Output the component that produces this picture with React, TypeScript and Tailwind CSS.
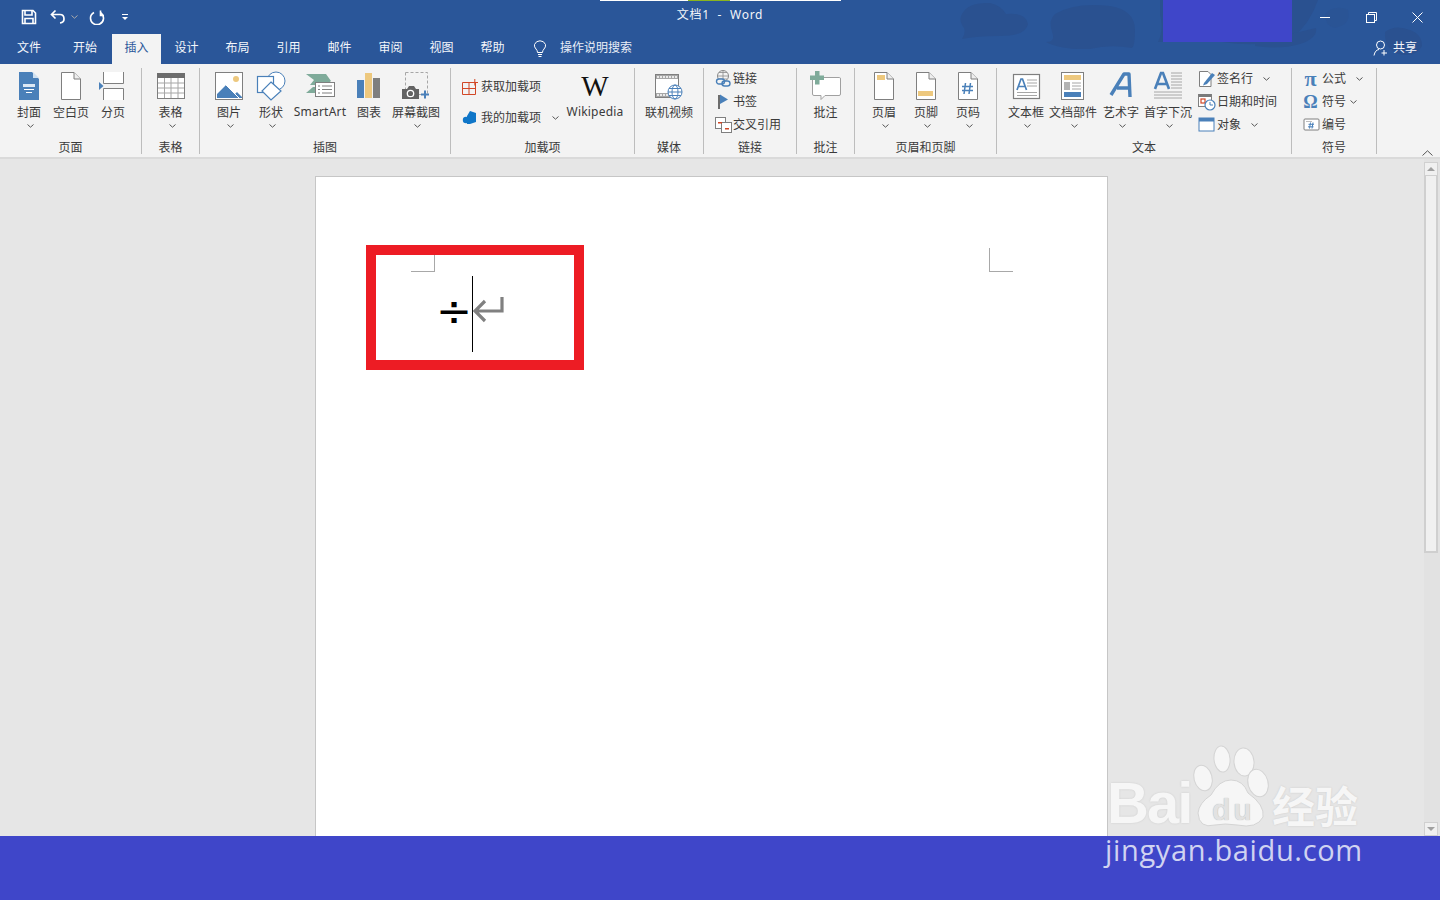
import React from "react";

const BLUE = "#4a80b9";
const TAN = "#edc87e";
const GRAY = "#7f7f7f";
const GREEN = "#7fab9a";
const RED = "#d24726";

type IconProps = { w: number; h?: number; children: React.ReactNode };
const Ic = ({ w, h = 30, children }: IconProps) => (
  <svg width={w} height={h} viewBox={`0 0 ${w} ${h}`} fill="none" className="block shrink-0">
    {children}
  </svg>
);

const Doc = ({ children }: { children?: React.ReactNode }) => (
  <Ic w={22}>
    <path d="M1.5 1.5H14L20.5 8V28.5H1.5Z" fill="#fff" stroke={GRAY} />
    <path d="M14 1.5V8H20.5" fill="#eee" stroke={GRAY} />
    {children}
  </Ic>
);

const Icons = {
  cover: (
    <Ic w={22}>
      <path d="M1 1H14L21 8V29H1Z" fill={BLUE} />
      <path d="M15 1L21 7H15Z" fill="#cfe0f0" />
      <rect x="5" y="13" width="12" height="3" fill="#dce8f4" />
      <rect x="6" y="18" width="10" height="1" fill="#fff" />
      <rect x="8" y="21" width="6" height="1" fill="#fff" />
    </Ic>
  ),
  blank: <Doc />,
  pageBreak: (
    <Ic w={29}>
      <path d="M0 11V19L4.5 15Z" fill={BLUE} />
      <path d="M4.5 1V12.5H24.5V1" stroke={GRAY} fill="#fff" />
      <path d="M4.5 29V17.5H24.5V29" stroke={GRAY} fill="#fff" />
    </Ic>
  ),
  table: (
    <Ic w={29}>
      <g transform="translate(1 0)">
        <rect x="0.5" y="2.5" width="27" height="25" fill="#fff" stroke={GRAY} />
        <rect x="0" y="2" width="28" height="5" fill="#6d6d6d" />
        <path d="M1 12H27M1 17H27M1 22H27M7.5 7V27M14 7V27M21 7V27" stroke="#a6a6a6" />
      </g>
    </Ic>
  ),
  picture: (
    <Ic w={29}>
      <rect x="0.5" y="1.5" width="27" height="27" fill="#fff" stroke={GRAY} />
      <circle cx="21" cy="8" r="3" fill={TAN} />
      <path d="M2 27V23L11 14L20 23L22 21L27 26V27Z" fill={BLUE} />
      <path d="M11 14L24 27" stroke="#fff" />
    </Ic>
  ),
  shapes: (
    <Ic w={30}>
      <circle cx="20" cy="10" r="9" fill="#fff" stroke={BLUE} />
      <rect x="1.5" y="5.5" width="16" height="16" fill="#fff" stroke={BLUE} strokeWidth="1.2" />
      <path d="M15 11L25 20L15 29L6 20Z" fill="#fff" stroke={BLUE} strokeWidth="1.2" />
    </Ic>
  ),
  smartart: (
    <Ic w={31}>
      <path d="M1 3H21L26 10L21 14H5L9 9Z" fill={GREEN} />
      <path d="M1 22L8 16H14V22Z" fill={GREEN} />
      <rect x="10.5" y="11.5" width="19" height="14" fill="#fff" stroke={GRAY} />
      <path d="M13 15H15M17 15H27M13 18.5H15M17 18.5H27M13 22H15M17 22H27" stroke={GRAY} />
    </Ic>
  ),
  chart: (
    <Ic w={24}>
      <rect x="0" y="9" width="7" height="18" fill={BLUE} />
      <rect x="8" y="2" width="7" height="25" fill={TAN} />
      <rect x="16" y="7" width="7" height="20" fill={GRAY} />
    </Ic>
  ),
  screenshot: (
    <Ic w={28}>
      <rect x="3.5" y="1.5" width="22" height="22" stroke="#a6a6a6" strokeDasharray="3 2" />
      <path d="M0 18H5L7 15H12L14 18H17V28H0Z" fill="#636363" />
      <circle cx="8.5" cy="22.5" r="3.2" fill="#636363" stroke="#fff" strokeWidth="1.3" />
      <path d="M19 23.5H27M23 19.5V27.5" stroke={BLUE} strokeWidth="2" />
    </Ic>
  ),
  wiki: (
    <span className="block h-[30px] w-[30px] text-center font-['Liberation_Serif',serif] text-[29px] leading-[30px] text-[#111]">
      W
    </span>
  ),
  video: (
    <Ic w={30}>
      <rect x="1.5" y="3.5" width="23" height="23" fill="#fff" stroke={GRAY} />
      <path d="M2 4H24V8H2ZM2 22H24V26H2Z" fill="#a6a6a6" />
      <path d="M4 5V7M7 5V7M10 5V7M13 5V7M16 5V7M19 5V7M22 5V7M4 23V25M7 23V25M10 23V25M13 23V25" stroke="#fff" strokeWidth="1.5" />
      <circle cx="21" cy="21" r="7" fill="#fff" stroke={BLUE} />
      <ellipse cx="21" cy="21" rx="3" ry="7" stroke={BLUE} />
      <path d="M14 21H28M15 17.5H27M15 24.5H27" stroke={BLUE} />
    </Ic>
  ),
  comment: (
    <Ic w={32}>
      <path d="M4 6.5H29.5Q30.5 6.5 30.5 8V23Q30.5 24.5 29 24.5H15L11 28.5V24.5H4Q2.5 24.5 2.5 23V8Q2.5 6.5 4 6.5Z" fill="#fff" stroke="#a0a0a0" />
      <path d="M5 0H9.5V4.5H14V9H9.5V13.5H5V9H0V4.5H5Z" fill={GREEN} />
    </Ic>
  ),
  header: (
    <Doc>
      <rect x="4" y="4" width="8" height="5" fill={TAN} />
    </Doc>
  ),
  footer: (
    <Doc>
      <rect x="3" y="20" width="15" height="5" fill={TAN} />
    </Doc>
  ),
  pageNum: (
    <Doc>
      <path d="M8.5 12L7 23M13.5 12L12 23M5 15.5H16M5 19.5H16" stroke={BLUE} strokeWidth="1.5" />
    </Doc>
  ),
  textbox: (
    <Ic w={29}>
      <rect x="1.5" y="3.5" width="26" height="24" fill="#fff" stroke={GRAY} strokeWidth="1.2" />
      <path d="M5 19L9 8H10.5L14.5 19M6.5 15.5H13" stroke={BLUE} strokeWidth="1.7" />
      <path d="M15 9H25M15 12H25M15 15H25M5 21.5H25M5 24.5H25" stroke="#a6a6a6" />
    </Ic>
  ),
  quickParts: (
    <Ic w={24}>
      <rect x="0.5" y="1.5" width="22" height="27" fill="#fff" stroke={GRAY} />
      <rect x="3" y="4" width="17" height="5" fill={TAN} />
      <rect x="3" y="11" width="6" height="8" fill="#b3b3b3" />
      <path d="M11 12H20M11 15H20M11 18H20" stroke="#a6a6a6" />
      <rect x="3" y="21" width="17" height="5" fill={BLUE} />
    </Ic>
  ),
  wordart: (
    <Ic w={24}>
      <path d="M2 24L15 3H20L21 26M8 17H20" stroke={BLUE} strokeWidth="3.4" strokeLinejoin="round" />
    </Ic>
  ),
  dropcap: (
    <Ic w={30}>
      <path d="M2 18L8 2H10L16 18M4 13H14" stroke={BLUE} strokeWidth="2.6" />
      <path d="M18 2H29M18 5H29M18 8H29M18 11H29M18 14H29M18 17H29M1 21H29M1 24H29M1 27H29" stroke="#a6a6a6" />
    </Ic>
  ),
  store: (
    <Ic w={16} h={16}>
      <path d="M.5 3.5H13.5V15.5H.5ZM.5 9.5H13.5M7 3.5V15.5" stroke={RED} strokeWidth="1" />
      <path d="M9.5 3.5H16M12.8 0V6.5" stroke={RED} strokeWidth="1" />
    </Ic>
  ),
  myAddins: (
    <Ic w={16} h={16}>
      <path d="M8 1L14 3V12L8 14H5V6Z" fill="#0f76c8" />
      <circle cx="4" cy="10" r="3.2" fill="#0f76c8" />
    </Ic>
  ),
  link: (
    <Ic w={18} h={18}>
      <circle cx="8" cy="6" r="5.5" stroke="#8a8a8a" />
      <path d="M2.5 6H13.5M8 .5V11.5M4 2.5H12M4 9H12" stroke="#8a8a8a" strokeWidth=".8" />
      <rect x="1.5" y="9" width="8" height="5" rx="2.5" fill="#f3f3f3" stroke={BLUE} strokeWidth="1.4" />
      <rect x="7" y="11" width="8" height="5" rx="2.5" fill="none" stroke={BLUE} strokeWidth="1.4" />
    </Ic>
  ),
  bookmark: (
    <Ic w={18} h={18}>
      <rect x="3" y="2" width="2" height="14" fill="#6d6d6d" />
      <path d="M5 1.5L13 6.5L5 11Z" fill={BLUE} />
    </Ic>
  ),
  crossRef: (
    <Ic w={18} h={18}>
      <rect x="0.5" y="1.5" width="10" height="11" fill="#fff" stroke={GRAY} />
      <rect x="6.5" y="6.5" width="10" height="10" fill="#fff" stroke={GRAY} />
      <rect x="3" y="6" width="4" height="1.5" fill={RED} />
      <rect x="10" y="12" width="4" height="1.5" fill={RED} />
    </Ic>
  ),
  signature: (
    <Ic w={18} h={18}>
      <path d="M1.5 1.5H10L13 4.5V16.5H1.5Z" fill="#fff" stroke={GRAY} />
      <path d="M6 13L14 3L17 5L9 14L5 15.5Z" fill={BLUE} />
    </Ic>
  ),
  datetime: (
    <Ic w={18} h={18}>
      <rect x="0.5" y="1.5" width="13" height="12" fill="#fff" stroke={GRAY} />
      <rect x="1" y="1" width="12" height="3" fill="#7a7a7a" />
      <rect x="3" y="6" width="4" height="4" stroke={RED} strokeWidth="1.2" />
      <circle cx="12" cy="12" r="5" fill="#fff" stroke={BLUE} strokeWidth="1.2" />
      <path d="M12 9V12H15" stroke={BLUE} />
    </Ic>
  ),
  object: (
    <Ic w={18} h={18}>
      <rect x="1" y="2" width="15" height="13" fill="#fff" stroke={BLUE} />
      <rect x="1" y="2" width="15" height="3.5" fill={BLUE} />
    </Ic>
  ),
  numbering: (
    <Ic w={18} h={18}>
      <rect x="1" y="3" width="15" height="11" rx="1" fill="#fff" stroke={GRAY} />
      <path d="M3 5.5H9" stroke="#bdbdbd" />
      <path d="M7.5 6.5L6.5 12.5M10 6.5L9 12.5M5.5 8.3H11M5 10.8H10.5" stroke={BLUE} />
    </Ic>
  ),
};

const Glyph = ({ c, cls }: { c: string; cls: string }) => (
  <span className={`block w-[15px] text-center font-['Liberation_Serif',serif] font-bold leading-[18px] text-[#4a80b9] ${cls}`}>{c}</span>
);

const Chevron = ({ cls = "" }: { cls?: string }) => (
  <svg width="7" height="4" viewBox="0 0 7 4" fill="none" className={`block shrink-0 ${cls}`}>
    <path d="M0.5 0.5L3.5 3.2L6.5 0.5" stroke="#555" strokeWidth="1" />
  </svg>
);

const Large = ({
  w,
  icon,
  label,
  chevron = true,
  latin = false,
}: {
  w: number;
  icon: React.ReactNode;
  label: string;
  chevron?: boolean;
  latin?: boolean;
}) => (
  <div className="flex shrink-0 flex-col items-center" style={{ width: w }}>
    <div className="flex h-[30px] items-center justify-center">{icon}</div>
    <div className={`h-[18px] whitespace-nowrap leading-[18px] ${latin ? "mt-[2px] tracking-[0.2px]" : "mt-[3px]"}`}>{label}</div>
    {chevron && <Chevron cls="ml-[3px] mt-[2px]" />}
  </div>
);

const Small = ({
  icon,
  label,
  iconW = 18,
  chevGap,
}: {
  icon: React.ReactNode;
  label: string;
  iconW?: number;
  chevGap?: number;
}) => (
  <div className="flex h-[20px] items-center whitespace-nowrap">
    <div className="flex justify-start" style={{ width: iconW }}>
      {icon}
    </div>
    <span>{label}</span>
    {chevGap !== undefined && (
      <span style={{ marginLeft: chevGap }}>
        <Chevron />
      </span>
    )}
  </div>
);

const Group = ({ w, title, children, cls = "" }: { w: number; title: string; children: React.ReactNode; cls?: string }) => (
  <div className="flex h-[86px] shrink-0 flex-col border-r border-[#bdbdbd]" style={{ width: w }}>
    <div className={`flex h-[72px] ${cls}`}>{children}</div>
    <div className="h-[14px] pt-[1px] text-center leading-[14px]">{title}</div>
  </div>
);

const tabs: [string, number][] = [
  ["文件", 58],
  ["开始", 54],
  ["插入", 49],
  ["设计", 51],
  ["布局", 51],
  ["引用", 51],
  ["邮件", 51],
  ["审阅", 51],
  ["视图", 51],
  ["帮助", 51],
];

export default function App() {
  return (
    <div className="relative flex h-[900px] w-[1440px] flex-col overflow-hidden bg-[#e6e6e6] font-['Noto_Sans','Noto_Sans_CJK_SC',sans-serif] text-[12px] text-[#3a3a3a]">
      {/* Title + tabs */}
      <header className="relative h-[64px] shrink-0 bg-[#2a5699] text-white">
        <svg width="500" height="64" viewBox="0 0 500 64" className="absolute right-0 top-0" fill="#2a5190">
          <path d="M22 14Q28 2 50 3Q62 6 66 14Q86 12 88 24Q86 36 60 36Q36 36 22 39Q26 32 24 28Q18 20 22 14Z" />
          <path d="M115 14Q135 2 170 6Q195 10 195 30Q195 46 192 48Q170 44 150 49Q120 50 106 42Q116 42 112 32Q108 20 115 14Z" />
          <path d="M220 0H378Q370 24 352 38Q320 48 282 42H218Q224 30 220 14Z" />
          <path d="M315 40Q345 36 376 28Q378 38 360 44Q340 50 315 46Z" />
          <path d="M445 32Q455 24 470 30Q482 34 482 46Q476 58 458 54Q444 48 445 32Z" />
          <path d="M385 14Q395 4 408 10Q412 24 395 28Q385 26 385 14Z" opacity=".35" />
        </svg>
        <div className="absolute left-[600px] top-0 h-px w-[241px] bg-white" />
        <div className="absolute left-[688px] top-0 h-px w-[42px] bg-[#8ab41e]" />
        <div className="absolute left-[1163px] top-0 h-[42px] w-[129px] bg-[#3f46c9]" />

        <div className="relative grid h-[34px] grid-cols-[1fr_auto_1fr]">
          <div className="flex items-center pb-[1px] pl-[21px]">
            <svg width="16" height="16" viewBox="0 0 16 16" fill="none">
              <path d="M1.5 1.5H12L14.5 4V14.5H1.5Z" stroke="#fff" strokeWidth="1.6" />
              <path d="M4 2V6H11V2M4 14V9.5H12V14" stroke="#fff" strokeWidth="1.6" />
            </svg>
            <svg width="16" height="16" viewBox="0 0 16 16" fill="none" className="ml-[13px]">
              <path d="M5.5 1.5L1.5 5.5L5.5 9.5M2 5.5H10Q14 5.5 14 10Q14 13.5 10 14" stroke="#fff" strokeWidth="1.7" />
            </svg>
            <Chevron cls="ml-[5px] invert" />
            <svg width="16" height="16" viewBox="0 0 16 16" fill="none" className="ml-[11px]">
              <path d="M5 3Q1.5 5 1.5 8.5A6.5 6.5 0 1 0 12 3.5M11.5 1V6H15" stroke="#fff" strokeWidth="1.6" transform="translate(0 .5)" />
            </svg>
            <svg width="8" height="8" viewBox="0 0 8 8" fill="#fff" className="ml-[16px]">
              <rect x="1" y="1" width="6" height="1" />
              <path d="M1 4H7L4 7Z" />
            </svg>
          </div>
          <div className="flex items-center whitespace-nowrap pb-[4px] text-[12px] tracking-[0.75px] text-[#f2f5fa]">
            文档1&nbsp;&nbsp;-&nbsp;&nbsp;Word
          </div>
          <div className="flex items-center justify-end">
            <div className="flex h-[30px] w-[46px] items-center justify-center">
              <div className="h-px w-[10px] bg-white" />
            </div>
            <div className="flex h-[30px] w-[46px] items-center justify-center">
              <svg width="11" height="11" viewBox="0 0 11 11" fill="none" stroke="#fff">
                <rect x=".5" y="2.5" width="8" height="8" />
                <path d="M2.5 2.5V.5H10.5V8.5H8.5" />
              </svg>
            </div>
            <div className="flex h-[30px] w-[46px] items-center justify-center">
              <svg width="11" height="11" viewBox="0 0 11 11" fill="none" stroke="#fff">
                <path d="M.5 .5L10.5 10.5M10.5 .5L.5 10.5" />
              </svg>
            </div>
          </div>
        </div>

        <div className="relative flex h-[30px] items-center">
          {tabs.map(([t, w]) => (
            <div
              key={t}
              style={{ width: w }}
              className={`flex h-[30px] items-center justify-center pb-[2px] ${t === "插入" ? "bg-[#f3f3f3] text-[#2b579a]" : "text-[#f4f6fb]"}`}
            >
              {t}
            </div>
          ))}
          <svg width="14" height="18" viewBox="0 0 14 18" fill="none" stroke="#fff" className="ml-[15px] shrink-0">
            <path d="M4.5 12.5Q4.5 10.5 3 9Q1 7 1.5 4.5Q3 .8 7 .8Q11 .8 12.5 4.5Q13 7 11 9Q9.5 10.5 9.5 12.5Z" />
            <path d="M5 14.5H9M5.5 16.5H8.5" />
          </svg>
          <span className="ml-[13px] pb-[2px] text-[#e9eef7]">操作说明搜索</span>
          <div className="ml-auto flex items-center gap-[4px] pb-[2px] pr-[23px]">
            <svg width="16" height="16" viewBox="0 0 16 16" fill="none" stroke="#fff">
              <circle cx="7.5" cy="5" r="4" />
              <path d="M1 15.5Q2 10 6 9.5M11 10V15.5M8.5 13H14" />
            </svg>
            <span className="text-[#f4f6fb]">共享</span>
          </div>
        </div>
      </header>

      {/* Ribbon */}
      <div className="flex h-[95px] shrink-0 border-b-2 border-[#dadada] bg-[#f3f3f3] pt-[4px]">
        <Group w={142} title="页面" cls="pl-[8px] pt-[3px]">
          <Large w={42} icon={Icons.cover} label="封面" />
          <Large w={42} icon={Icons.blank} label="空白页" chevron={false} />
          <Large w={42} icon={Icons.pageBreak} label="分页" chevron={false} />
        </Group>
        <Group w={58} title="表格" cls="justify-center pt-[3px]">
          <Large w={42} icon={Icons.table} label="表格" />
        </Group>
        <Group w={251} title="插图" cls="pl-[8px] pt-[3px]">
          <Large w={42} icon={Icons.picture} label="图片" />
          <Large w={42} icon={Icons.shapes} label="形状" />
          <Large w={56} icon={Icons.smartart} label="SmartArt" chevron={false} latin />
          <Large w={42} icon={Icons.chart} label="图表" chevron={false} />
          <Large w={52} icon={Icons.screenshot} label="屏幕截图" />
        </Group>
        <Group w={184} title="加载项" cls="pl-[11px]">
          <div className="flex w-[104px] flex-col gap-[11px] pt-[9px]">
            <Small icon={Icons.store} label="获取加载项" iconW={19} />
            <Small icon={Icons.myAddins} label="我的加载项" iconW={19} chevGap={11} />
          </div>
          <div className="pt-[3px]">
            <Large w={58} icon={Icons.wiki} label="Wikipedia" chevron={false} latin />
          </div>
        </Group>
        <Group w={69} title="媒体" cls="justify-center pt-[3px]">
          <Large w={60} icon={Icons.video} label="联机视频" chevron={false} />
        </Group>
        <Group w={93} title="链接" cls="flex-col gap-[3px] pl-[11px] pt-[1px]">
          <Small icon={Icons.link} label="链接" />
          <Small icon={Icons.bookmark} label="书签" />
          <Small icon={Icons.crossRef} label="交叉引用" />
        </Group>
        <Group w={58} title="批注" cls="justify-center pt-[3px]">
          <Large w={48} icon={Icons.comment} label="批注" chevron={false} />
        </Group>
        <Group w={142} title="页眉和页脚" cls="pl-[8px] pt-[3px]">
          <Large w={42} icon={Icons.header} label="页眉" />
          <Large w={42} icon={Icons.footer} label="页脚" />
          <Large w={42} icon={Icons.pageNum} label="页码" />
        </Group>
        <Group w={295} title="文本" cls="pl-[8px] pt-[3px]">
          <Large w={42} icon={Icons.textbox} label="文本框" />
          <Large w={52} icon={Icons.quickParts} label="文档部件" />
          <Large w={44} icon={Icons.wordart} label="艺术字" />
          <Large w={50} icon={Icons.dropcap} label="首字下沉" />
          <div className="ml-[5px] mt-[-2px] flex flex-col gap-[3px]">
            <Small icon={Icons.signature} label="签名行" iconW={19} chevGap={10} />
            <Small icon={Icons.datetime} label="日期和时间" iconW={19} />
            <Small icon={Icons.object} label="对象" iconW={19} chevGap={10} />
          </div>
        </Group>
        <Group w={85} title="符号" cls="flex-col gap-[3px] pl-[11px] pt-[1px]">
          <Small icon={<Glyph c="π" cls="text-[22px]" />} label="公式" iconW={19} chevGap={10} />
          <Small icon={<Glyph c="Ω" cls="text-[18px]" />} label="符号" iconW={19} chevGap={4} />
          <Small icon={Icons.numbering} label="编号" iconW={19} />
        </Group>
        <div className="flex flex-1 items-end justify-end pb-[1px] pr-[7px]">
          <svg width="11" height="6" viewBox="0 0 11 6" fill="none">
            <path d="M.5 5.5L5.5 .8L10.5 5.5" stroke="#555" />
          </svg>
        </div>
      </div>

      {/* Document area */}
      <main className="flex min-h-0 flex-1">
        <div className="flex-1 pl-[315px] pt-[17px]">
          <div className="relative h-full w-[793px] border border-b-0 border-[#c6c6c6] bg-white">
            <div className="flex justify-between pl-[95px] pr-[94px] pt-[71px]">
              <div className="h-[24px] w-[24px] border-b border-r border-[#a8a8a8]" />
              <div className="h-[24px] w-[24px] border-b border-l border-[#a8a8a8]" />
            </div>
            <div className="ml-[120px] mt-[13px] flex h-[50px] items-center">
              <span className="font-['DejaVu_Sans',sans-serif] text-[43px] leading-[50px] text-black">÷</span>
            </div>
            {/* Caret and paragraph mark */}
            <div className="absolute left-[156px] top-[99px] h-[76px] w-px bg-black" />
            <svg width="32" height="30" viewBox="0 0 32 30" fill="none" className="absolute left-[156px] top-[118px]" stroke="#808080" strokeWidth="3.2">
              <path d="M30 2V16H3M13 6L3 16L13 26" />
            </svg>
            {/* Red annotation */}
            <div className="absolute left-[50px] top-[68px] h-[125px] w-[218px] border-[10px] border-[#ed1c24]" />
          </div>
        </div>
        <aside className="flex w-[16px] shrink-0 flex-col bg-[#e2e2e2] pt-[3px]">
          <div className="flex h-[14px] w-[14px] items-center justify-center border border-[#d0d0d0] bg-[#f0f0f0]">
            <div className="h-0 w-0 border-x-[4px] border-b-[4px] border-x-transparent border-b-[#a0a0a0]" />
          </div>
          <div className="h-[377px] w-[14px] border-2 border-t-0 border-[#cfcfcf] bg-[#f0f0f0]" />
          <div className="flex-1" />
          <div className="flex h-[14px] w-[14px] items-center justify-center border border-[#d0d0d0] bg-[#f0f0f0]">
            <div className="h-0 w-0 border-x-[4px] border-t-[4px] border-x-transparent border-t-[#a0a0a0]" />
          </div>
        </aside>
      </main>

      {/* Bottom band */}
      <footer className="h-[64px] shrink-0 bg-[#3f46c9]" />

      {/* Watermark */}
      <div className="pointer-events-none absolute left-[1105px] top-[745px] h-[125px] w-[260px]">
        <svg width="120" height="90" viewBox="0 0 120 90" className="absolute left-[70px] top-0" fill="#f6f6f6" stroke="#d4d4d4">
          <ellipse cx="47" cy="14" rx="8" ry="13" transform="rotate(-5 47 14)" />
          <ellipse cx="69" cy="17" rx="10" ry="14" transform="rotate(-5 69 17)" />
          <ellipse cx="28" cy="33" rx="9" ry="13" transform="rotate(-15 28 33)" />
          <ellipse cx="83" cy="38" rx="10" ry="14" transform="rotate(-15 83 38)" />
          <path d="M56 35Q68 35 73 48Q90 60 88 72Q82 84 62 80Q50 78 40 80Q24 84 23 68Q24 58 36 50Q44 35 56 35Z" />
        </svg>
        <span className="absolute left-[2px] top-[29px] font-['Liberation_Sans',sans-serif] text-[58px] font-bold leading-[58px] tracking-[-2px] text-[#f6f6f6] [text-shadow:0_0_2px_#c8c8c8]">
          Bai
        </span>
        <span className="absolute left-[107px] top-[50px] font-['Liberation_Sans',sans-serif] text-[30px] font-bold leading-[30px] tracking-[3px] text-[#e2e2e2] [text-shadow:0_0_1px_#a8a8a8]">
          du
        </span>
        <span className="absolute left-[167px] top-[34px] font-['Noto_Sans_CJK_SC',sans-serif] text-[43px] font-bold leading-[50px] text-[#f6f6f6] [text-shadow:0_0_2px_#c8c8c8]">
          经验
        </span>
        <span className="absolute left-[0px] top-[87px] font-['Open_Sans',sans-serif] text-[29px] leading-[36px] tracking-[0.65px] text-[#d0d3f1]">
          jingyan.baidu.com
        </span>
      </div>
    </div>
  );
}
